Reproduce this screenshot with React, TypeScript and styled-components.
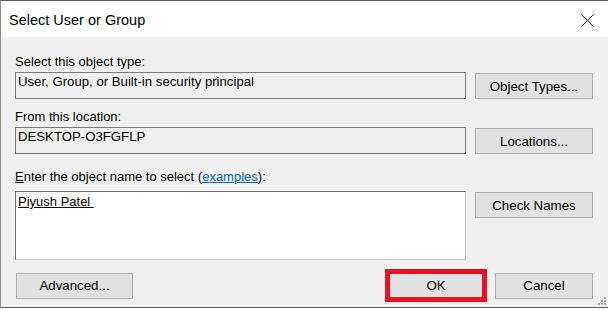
import styled, { createGlobalStyle } from 'styled-components';

const GlobalStyle = createGlobalStyle`
  html, body {
    margin: 0;
    padding: 0;
    background: #ffffff;
  }

  body {
    font-family: 'Liberation Sans', Arial, sans-serif;
    color: #000;
  }
`;

export default function App() {
  return (
    <>
      <GlobalStyle />
      <Window>
        <TitleBar>
          <Title>Select User or Group</Title>
          <CloseButton aria-label='Close'>
            <svg width='13' height='13' viewBox='0 0 13 13'>
              <path d='M0.5 0.5 L12.5 12.5 M12.5 0.5 L0.5 12.5' stroke='#1a1a1a' strokeWidth='1' />
            </svg>
          </CloseButton>
        </TitleBar>

        <Body>
          <Grid>
            <Label>Select this object type:</Label>
            <Field>User, Group, or Built-in security principal</Field>
            <Button>Object Types...</Button>

            <Label $gap={10}>From this location:</Label>
            <Field>DESKTOP-O3FGFLP</Field>
            <Button>Locations...</Button>

            <Label $gap={15} $after={6}>
              <u>E</u>nter the object name to select (<Link href='#'>examples</Link>):
            </Label>
            <NameBox>
              <Name>Piyush Patel </Name>
            </NameBox>
            <Button>Check Names</Button>
          </Grid>

          <Footer>
            <Button $width={117}>Advanced...</Button>
            <Spacer />
            <Button $width={102} $highlight>
              OK
            </Button>
            <Button $width={98}>Cancel</Button>
          </Footer>
        </Body>

        <Grip viewBox='0 0 9 9' width='9' height='9'>
          <rect x='7' y='1' width='2' height='2' />
          <rect x='4' y='4' width='2' height='2' />
          <rect x='7' y='4' width='2' height='2' />
          <rect x='1' y='7' width='2' height='2' />
          <rect x='4' y='7' width='2' height='2' />
          <rect x='7' y='7' width='2' height='2' />
        </Grip>
      </Window>
    </>
  );
}

const Window = styled.div`
  position: relative;
  width: 608px;
  height: 308px;
  box-sizing: border-box;
  display: flex;
  flex-direction: column;
  border-top: 1px solid #5c5c5c;
  border-left: 1px solid #8c8c8c;
  border-bottom: 1px solid #5a5a5a;
  background: #f0f0f0;
`;

const TitleBar = styled.div`
  height: 36px;
  flex-shrink: 0;
  box-sizing: border-box;
  display: flex;
  align-items: flex-start;
  justify-content: space-between;
  padding: 11px 14px 0 8px;
  background: #ffffff;
`;

const Title = styled.h1`
  margin: 0;
  font-size: 14.5px;
  font-weight: 400;
  line-height: 17px;
`;

const CloseButton = styled.button`
  margin-top: 2px;
  padding: 0;
  border: 0;
  background: none;
  display: flex;
`;

const Body = styled.div`
  flex: 1;
  display: flex;
  flex-direction: column;
  padding: 17px 15px 0 14px;
`;

const Grid = styled.div`
  display: grid;
  grid-template-columns: 451px 118px;
  column-gap: 9px;
  align-items: start;
`;

const Label = styled.div<{ $gap?: number; $after?: number }>`
  grid-column: 1 / -1;
  margin-top: ${({ $gap }) => $gap ?? 0}px;
  margin-bottom: ${({ $after }) => $after ?? 2}px;
  font-size: 13px;
  line-height: 16px;
  white-space: nowrap;
`;

const Link = styled.a`
  color: #0066cc;
  text-decoration: underline;
`;

const Field = styled.div`
  height: 27px;
  box-sizing: border-box;
  padding: 1px 2px;
  border: 1px solid #7a7a7a;
  background: #f0f0f0;
  font-size: 13.2px;
  line-height: 16px;
  white-space: nowrap;
`;

const NameBox = styled.div`
  height: 69px;
  box-sizing: border-box;
  padding: 2px 2px;
  border: 1px solid #c6c6c6;
  border-top-color: #6e6e6e;
  border-left-color: #6e6e6e;
  background: #ffffff;
  font-size: 13px;
  line-height: 16px;
`;

const Name = styled.span`
  text-decoration: underline;
  white-space: pre;
`;

const Button = styled.button<{ $width?: number; $highlight?: boolean }>`
  width: ${({ $width }) => ($width ? `${$width}px` : '100%')};
  height: ${({ $highlight }) => ($highlight ? 33 : 26)}px;
  margin-top: ${({ $highlight }) => ($highlight ? 0 : 1)}px;
  box-sizing: border-box;
  padding: 0;
  border: ${({ $highlight }) =>
    $highlight ? '5px solid #e3141f' : '1px solid #adadad'};
  background: #e1e1e1;
  font-family: 'Liberation Sans', Arial, sans-serif;
  font-size: 13.3px;
  color: #000;
  white-space: nowrap;
`;

const Footer = styled.div`
  display: flex;
  align-items: center;
  gap: 8px;
  margin-top: 9px;
  padding-left: 1px;

  ${Button} {
    margin-top: 0;
  }
`;

const Spacer = styled.div`
  flex: 1;
`;

const Grip = styled.svg`
  position: absolute;
  right: 2px;
  bottom: 2px;
  fill: #a8a8a8;
`;
